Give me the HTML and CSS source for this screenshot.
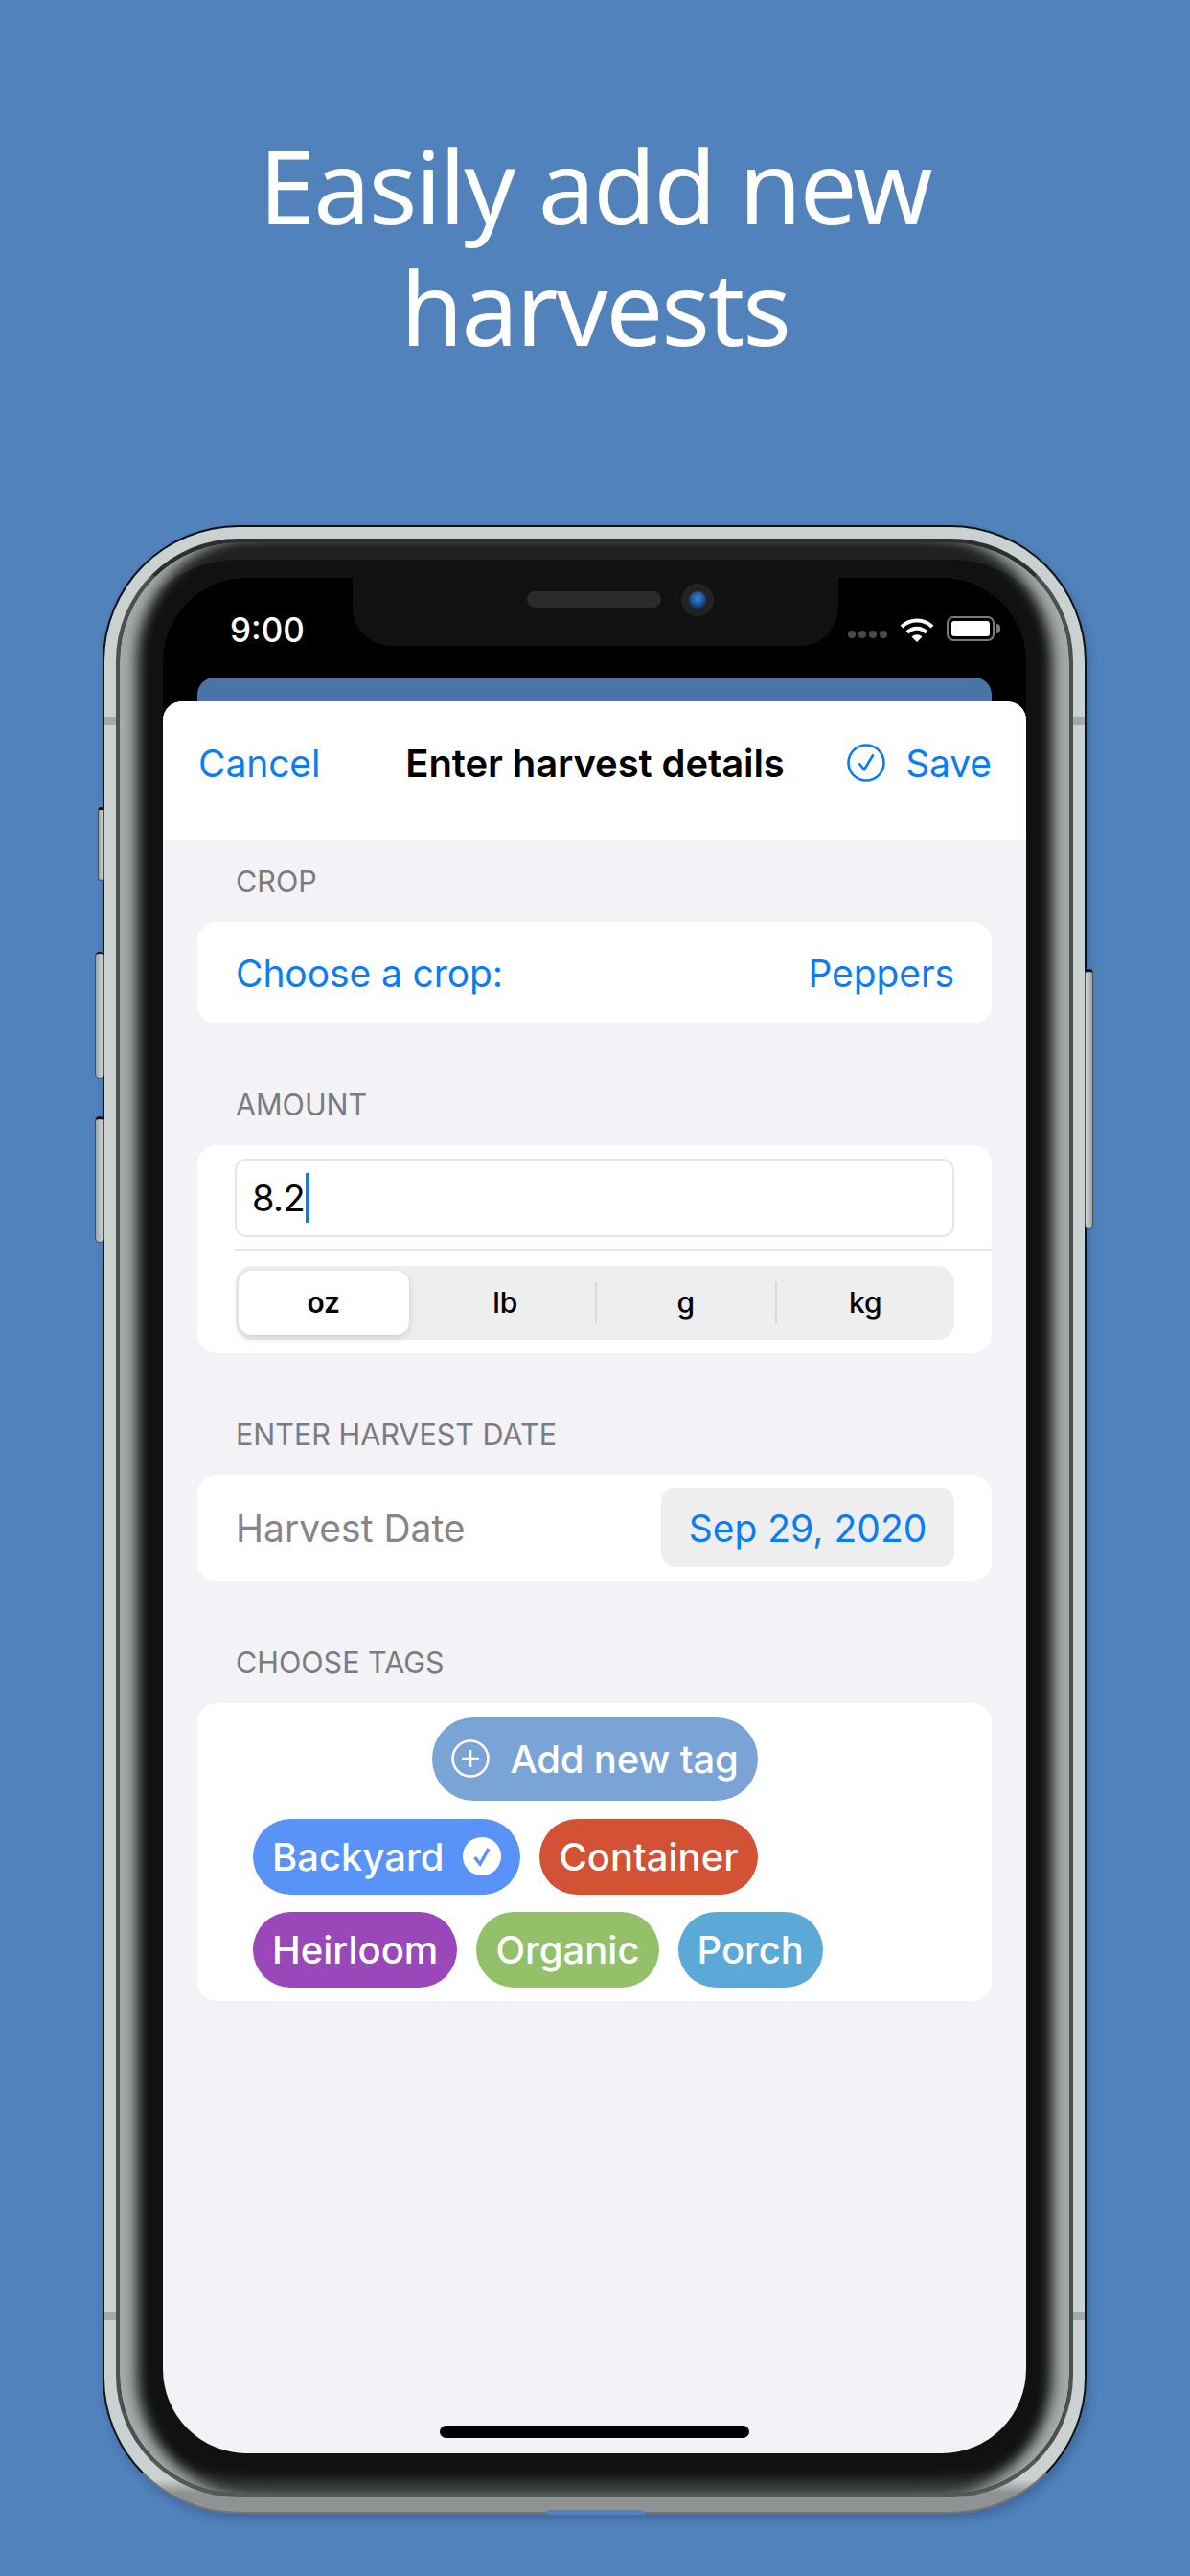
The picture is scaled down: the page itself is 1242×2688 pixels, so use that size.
FILE: index.html
```html
<!DOCTYPE html>
<html lang="en">
<head>
    <meta charset="UTF-8">
    <title>Easily add new harvests</title>
    <link rel="stylesheet" href="styles.css">
</head>
<body>

    <h1 class="headline">Easily add new<br>harvests</h1>

    <div class="phone">
        <span class="side-btn silence"></span>
        <span class="side-btn vol-up"></span>
        <span class="side-btn vol-down"></span>
        <span class="side-btn power"></span>
        <span class="antenna antenna-tl"></span>
        <span class="antenna antenna-tr"></span>
        <span class="antenna antenna-bl"></span>
        <span class="antenna antenna-br"></span>
        <span class="port"></span>

        <div class="rim">
            <div class="screen">
                <div class="notch">
                    <span class="speaker"></span>
                    <span class="camera"></span>
                </div>

                <div class="status-bar">
                    <span class="clock">9:00</span>
                    <div class="status-icons">
                        <div class="signal"><i></i><i></i><i></i><i></i></div>
                        <svg class="wifi" viewBox="0 0 36 25">
                            <path d="M2 9 A23 23 0 0 1 34 9" fill="none" stroke="#fff" stroke-width="4"/>
                            <path d="M8 15 A14 14 0 0 1 28 15" fill="none" stroke="#fff" stroke-width="4"/>
                            <path d="M12.5 19.5 L18 25 L23.5 19.5 A8 8 0 0 0 12.5 19.5 Z" fill="#fff"/>
                        </svg>
                        <div class="battery"><span></span></div>
                    </div>
                </div>

                <div class="peek"></div>

                <div class="sheet">
                    <div class="sheet-header">
                        <span class="link">Cancel</span>
                        <span class="sheet-title">Enter harvest details</span>
                        <span class="link save">
                            <svg class="save-icon" viewBox="0 0 40 40">
                                <circle cx="20" cy="20" r="18.5" fill="none" stroke="#0a7cf5" stroke-width="2.6"/>
                                <path d="M12.5 20.5 L18 27 L27.5 11.5" fill="none" stroke="#0a7cf5" stroke-width="2.6"/>
                            </svg>
                            Save
                        </span>
                    </div>

                    <div class="section first">
                        <div class="section-label">CROP</div>
                        <div class="card row crop-row">
                            <span class="link">Choose a crop:</span>
                            <span class="link">Peppers</span>
                        </div>
                    </div>

                    <div class="section">
                        <div class="section-label">AMOUNT</div>
                        <div class="card amount-card">
                            <div class="amount-input">8.2<span class="caret"></span></div>
                            <div class="divider"></div>
                            <div class="segments">
                                <div class="segment selected">oz</div>
                                <div class="segment">lb</div>
                                <div class="segment split">g</div>
                                <div class="segment split">kg</div>
                            </div>
                        </div>
                    </div>

                    <div class="section">
                        <div class="section-label">ENTER HARVEST DATE</div>
                        <div class="card row date-row">
                            <span class="date-label">Harvest Date</span>
                            <span class="date-value">Sep 29, 2020</span>
                        </div>
                    </div>

                    <div class="section">
                        <div class="section-label">CHOOSE TAGS</div>
                        <div class="card tags-card">
                            <div class="add-tag">
                                <svg class="plus-icon" viewBox="0 0 40 40">
                                    <circle cx="20" cy="20" r="18.5" fill="none" stroke="#fff" stroke-width="2.6"/>
                                    <path d="M20 11 V29 M11 20 H29" fill="none" stroke="#fff" stroke-width="2.6"/>
                                </svg>
                                Add new tag
                            </div>
                            <div class="tags">
                                <div class="tag backyard">
                                    Backyard
                                    <svg class="tag-check" viewBox="0 0 40 40">
                                        <circle cx="20" cy="20" r="20" fill="#fff"/>
                                        <path d="M12.5 21 L18 28 L27 12" fill="none" stroke="#5a93f8" stroke-width="3.4"/>
                                    </svg>
                                </div>
                                <div class="tag container">Container</div>
                                <div class="tag heirloom">Heirloom</div>
                                <div class="tag organic">Organic</div>
                                <div class="tag porch">Porch</div>
                            </div>
                        </div>
                    </div>

                    <div class="home-indicator"></div>
                </div>
            </div>
        </div>
    </div>

</body>
</html>
```

FILE: styles.css
```css
body {
    margin: 0;
    width: 1242px;
    height: 2688px;
    overflow: hidden;
    background-color: #5182bc;
    font-family: 'Inter', 'Liberation Sans', sans-serif;
}

.headline {
    margin: 0;
    height: 418px;
    padding-top: 130px;
    color: white;
    text-align: center;
    font-family: 'Noto Sans', sans-serif;
    font-size: 106px;
    font-stretch: 84%;
    font-weight: 400;
    letter-spacing: -2px;
    line-height: 127px;
}

.phone {
    position: relative;
    box-sizing: border-box;
    width: 1027px;
    height: 2075px;
    margin-left: 107px;
    padding: 12px 12px 15px;
    border: 2.5px solid #101214;
    border-bottom-color: #6f7375;
    border-radius: 142px;
    background: linear-gradient(to bottom, #c9d1d1 calc(100% - 34px), #8e9293 calc(100% - 20px));
    box-shadow: 3px 6px 10px rgba(25, 50, 90, 0.3);
}

.side-btn {
    position: absolute;
    box-sizing: border-box;
    border: 1.5px solid #4a4d50;
    border-top: 3px solid #111;
    border-radius: 5px;
    background: linear-gradient(to right, #9ea3a8, #d3d8da);
}

.silence {
    left: -7px;
    top: 292px;
    width: 7px;
    height: 77px;
}

.vol-up {
    left: -10px;
    top: 443px;
    width: 10px;
    height: 133px;
}

.vol-down {
    left: -10px;
    top: 615px;
    width: 10px;
    height: 132px;
}

.power {
    right: -9px;
    top: 461px;
    width: 9px;
    height: 271px;
    background: linear-gradient(to left, #9ea3a8, #d3d8da);
}

.antenna {
    position: absolute;
    width: 12px;
    height: 9px;
    background-color: #a4a9a9;
}

.antenna-tl {
    left: 0;
    top: 198px;
}

.antenna-tr {
    right: 0;
    top: 198px;
}

.antenna-bl {
    left: 0;
    top: 1862px;
}

.antenna-br {
    right: 0;
    top: 1862px;
}

.port {
    position: absolute;
    left: 460px;
    bottom: -3px;
    width: 104px;
    height: 5px;
    border-radius: 5px 5px 0 0;
    background-color: #5182bc;
}

.rim {
    box-sizing: border-box;
    height: 100%;
    padding: 36.5px 45px 42px;
    border: 4px solid #4d4f50;
    border-top-color: #2c2e2f;
    border-bottom-color: #55585a;
    border-radius: 128px;
    background-color: #101212;
    box-shadow: inset 26px 0 14px -8px #a6a9a9, inset -26px 0 14px -8px #a6a9a9, inset 0 -26px 14px -12px #3e4041, inset 0 20px 0 -2px #1e2021;
}

.screen {
    position: relative;
    display: flex;
    flex-direction: column;
    height: 100%;
    border-radius: 88px;
    background-color: black;
    overflow: hidden;
}

.notch {
    position: absolute;
    left: 198px;
    top: 0;
    display: flex;
    align-items: center;
    box-sizing: border-box;
    width: 507px;
    height: 71px;
    padding: 0 0 25px 182px;
    border-radius: 0 0 40px 40px;
    background-color: #101212;
}

.speaker {
    width: 140px;
    height: 17px;
    border-radius: 9px;
    background-color: #2a2c2c;
}

.camera {
    width: 18px;
    height: 18px;
    margin-left: 21px;
    border: 8px solid #212324;
    border-radius: 50%;
    background: radial-gradient(circle at 50% 40%, #3f86d6, #0f3a78 70%);
}

.status-bar {
    display: flex;
    justify-content: space-between;
    align-items: flex-start;
    box-sizing: border-box;
    height: 104px;
    padding: 36px 33px 0 70px;
    color: white;
}

.clock {
    font-size: 35px;
    font-weight: 500;
    line-height: 36px;
}

.status-icons {
    display: flex;
    align-items: flex-start;
    padding-top: 4px;
}

.signal {
    display: flex;
    gap: 3px;
    margin-top: 15px;
}

.signal i {
    width: 8px;
    height: 8px;
    border-radius: 50%;
    background-color: #4a4a4a;
}

.wifi {
    width: 36px;
    height: 25px;
    margin: 2px 13px 0 13px;
}

.battery {
    position: relative;
    box-sizing: border-box;
    width: 50px;
    height: 26px;
    padding: 3px;
    border: 2px solid #77797b;
    border-radius: 7px;
}

.battery span {
    display: block;
    height: 100%;
    border-radius: 3px;
    background-color: white;
}

.battery::after {
    content: "";
    position: absolute;
    right: -8px;
    top: 6px;
    width: 4px;
    height: 10px;
    border-radius: 0 4px 4px 0;
    background-color: #77797b;
}

.peek {
    flex: none;
    height: 25px;
    margin: 0 36px;
    border-radius: 18px 18px 0 0;
    background-color: #4a74a8;
}

.sheet {
    flex: 1;
    display: flex;
    flex-direction: column;
    border-radius: 20px 20px 0 0;
    background-color: #f2f2f7;
    overflow: hidden;
}

.sheet-header {
    display: grid;
    grid-template-columns: 1fr auto 1fr;
    align-items: center;
    box-sizing: border-box;
    height: 145px;
    padding: 40px 36px 59px 37px;
    background-color: white;
}

.link {
    color: #0a7cf5;
    font-size: 39px;
    letter-spacing: -0.1px;
}

.sheet-title {
    color: black;
    font-size: 40px;
    font-weight: 600;
    letter-spacing: -0.1px;
}

.save {
    display: flex;
    justify-content: flex-end;
    align-items: center;
    gap: 21px;
}

.save-icon {
    width: 40px;
    height: 40px;
}

.section {
    margin-top: 66px;
}

.section.first {
    margin-top: 24px;
}

.section-label {
    margin-bottom: 24px;
    padding: 1px 0 0 76px;
    color: #7b7b80;
    font-size: 30.5px;
    line-height: 36px;
}

.card {
    margin: 0 36px;
    border-radius: 20px;
    background-color: white;
}

.row {
    display: flex;
    justify-content: space-between;
    align-items: center;
    box-sizing: border-box;
    padding: 0 39px 0 40px;
}

.crop-row {
    height: 106px;
    padding-top: 2px;
}

.amount-card {
    box-sizing: border-box;
    height: 217px;
    padding-top: 14px;
}

.amount-input {
    display: flex;
    align-items: center;
    box-sizing: border-box;
    height: 82px;
    margin: 0 39px;
    padding-left: 16px;
    border: 2px solid #e6e6e8;
    border-radius: 12px;
    color: black;
    font-size: 38px;
    letter-spacing: -0.6px;
}

.caret {
    width: 4px;
    height: 52px;
    margin-left: 1px;
    background-color: #0a7cf5;
}

.divider {
    height: 2px;
    margin: 12px 0 0 39px;
    background-color: #e6e6e8;
}

.segments {
    display: grid;
    grid-template-columns: repeat(4, 1fr);
    align-items: center;
    height: 77px;
    margin: 16px 39px 0 40px;
    border-radius: 18px;
    background-color: #eeeeef;
}

.segment {
    display: flex;
    justify-content: center;
    align-items: center;
    height: 43px;
    color: black;
    font-size: 30px;
    font-weight: 500;
}

.segment.selected {
    height: 67px;
    margin: 0 7px 0 3px;
    border-radius: 14px;
    background-color: white;
    font-weight: 600;
    box-shadow: 0 3px 8px rgba(0, 0, 0, 0.13);
}

.segment.split {
    border-left: 2px solid #d8d8da;
}

.date-row {
    height: 111px;
}

.date-label {
    color: #86868a;
    font-size: 39px;
}

.date-value {
    display: flex;
    justify-content: center;
    align-items: center;
    width: 306px;
    height: 82px;
    border-radius: 14px;
    background-color: #eeeeef;
    color: #0a7cf5;
    font-size: 39px;
}

.tags-card {
    box-sizing: border-box;
    height: 311px;
    padding-top: 15px;
}

.add-tag {
    display: flex;
    align-items: center;
    gap: 22px;
    box-sizing: border-box;
    width: 340px;
    height: 87px;
    margin: 0 auto;
    padding-left: 20px;
    border-radius: 44px;
    background-color: #7aa3d6;
    color: white;
    font-size: 40px;
    font-weight: 500;
    letter-spacing: -0.2px;
}

.plus-icon {
    flex: none;
    width: 40px;
    height: 40px;
}

.tags {
    display: flex;
    flex-wrap: wrap;
    gap: 18px 20px;
    width: 620px;
    margin: 19px 0 0 58px;
}

.tag {
    display: flex;
    align-items: center;
    gap: 20px;
    height: 79px;
    padding: 0 20px;
    border-radius: 40px;
    color: white;
    font-size: 40px;
    font-weight: 500;
}

.tag-check {
    width: 40px;
    height: 40px;
}

.backyard {
    background-color: #5a93f8;
}

.container {
    background-color: #d35135;
}

.heirloom {
    background-color: #9a47ba;
}

.organic {
    background-color: #93c068;
}

.porch {
    background-color: #5aa9d6;
}

.home-indicator {
    flex: none;
    width: 323px;
    height: 13px;
    margin: auto auto 16px;
    border-radius: 7px;
    background-color: black;
}
```
